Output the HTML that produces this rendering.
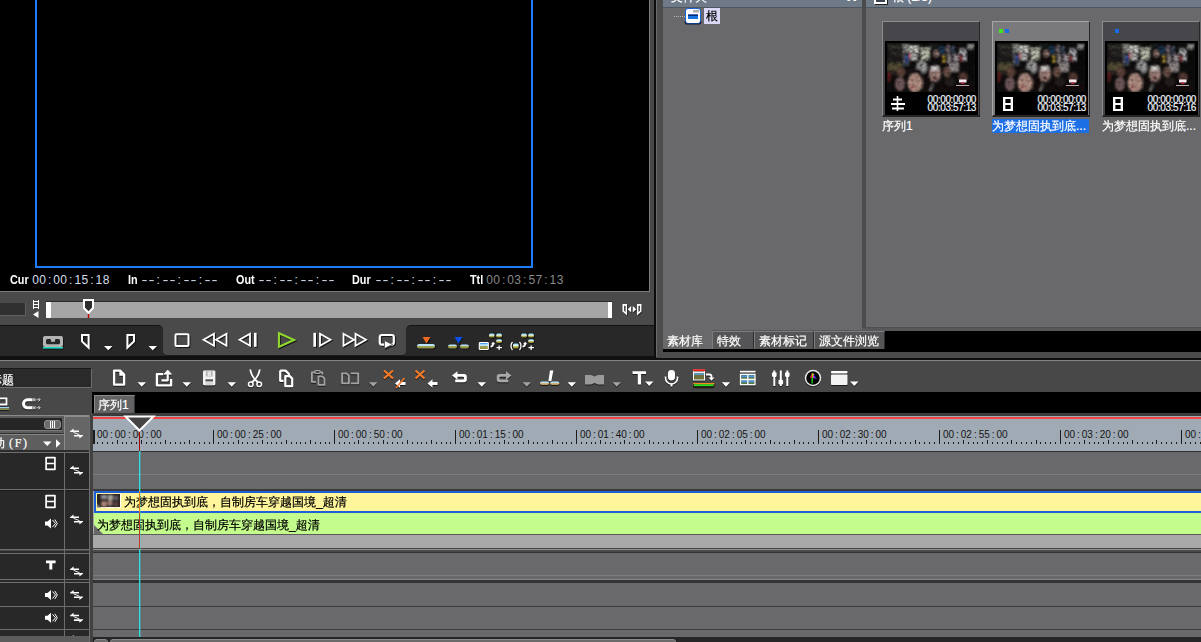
<!DOCTYPE html>
<html lang="zh">
<head>
<meta charset="utf-8">
<title>EDIUS</title>
<style>
html,body{margin:0;padding:0;}
body{width:1201px;height:642px;overflow:hidden;position:relative;background:#3f3f3f;
 font-family:"Liberation Sans","WenQuanYi Zen Hei","Noto Sans CJK SC",sans-serif;font-size:12px;color:#fff;}
.a{position:absolute;}
.cj{font-family:"Liberation Sans","WenQuanYi Zen Hei","Noto Sans CJK SC",sans-serif;font-size:12px;line-height:14px;white-space:nowrap;-webkit-text-stroke:0.2px;}
svg{position:absolute;overflow:visible;}
/* ---------- monitor ---------- */
#mon{left:0;top:0;width:649px;height:291px;background:#000;}
#monR{left:649px;top:0;width:1px;height:292px;background:#7c7c7c;}
#monB{left:0;top:291px;width:650px;height:1px;background:#7c7c7c;}
#safe{left:35px;top:-4px;width:494px;height:268px;border:2px solid #1f7cf8;}
.tc{top:273px;height:14px;line-height:14px;font-size:11px;white-space:nowrap;}
.tc b{font-weight:bold;color:#fff;font-size:12px;display:inline-block;transform:scaleX(0.9);transform-origin:0 50%;}
.tn{color:#d6deee;font-size:0;}
.tn i{display:inline-block;font-style:normal;font-size:12px;width:7.05px;text-align:center;}
.tn i.d{transform:scaleX(1.5);}
#scrubP{left:0;top:292px;width:654px;height:33px;background:#4a4a4a;border-radius:0 0 4px 0;}
#gapV{left:650px;top:0;width:4px;height:326px;background:#484848;}
#blkV{left:654px;top:0;width:2px;height:359px;background:#0c0c0c;}
#ltV{left:656px;top:0;width:1px;height:357px;background:#6c6c6c;}
#frmV{left:657px;top:0;width:6px;height:357px;background:#4c4c4c;}
#trans{left:0;top:325px;width:654px;height:31px;background:#282828;border-top:1px solid #141414;box-sizing:border-box;}
#transTab{left:163px;top:325px;width:243px;height:30px;background:#4a4a4a;border-radius:0 0 4px 4px;box-shadow:0 1px 0 #1c1c1c;}
.crn{top:325px;width:5px;height:5px;background:#4a4a4a;}
.crn i{position:absolute;left:0;top:0;width:5px;height:5px;background:#282828;border-top:1px solid #141414;box-sizing:border-box;}
#hblk{left:0;top:356px;width:654px;height:4px;background:#101010;}
#hblk2{left:654px;top:358px;width:547px;height:2px;background:#101010;}
#hlt{left:0;top:360px;width:1201px;height:1px;background:#868686;}
/* ---------- bin ---------- */
#bin{left:663px;top:0;width:538px;height:331px;background:#69696b;}
#binHdr{left:663px;top:0;width:538px;height:7px;background:#6e7a88;border-bottom:1px solid #4e565f;}
#split{left:862px;top:0;width:4px;height:328px;background:#4b4b4d;}

#binFrm{left:657px;top:352px;width:544px;height:6px;background:#4c4c4c;}
.tab{top:331px;height:18px;background:#555557;border-left:1px solid #7d7d7d;border-top:1px solid #7d7d7d;border-right:1px solid #2c2c2c;box-sizing:border-box;}
.tab span,.tabA span{position:absolute;left:3px;top:2px;}
.card{width:98px;height:96px;background:#47464b;box-sizing:border-box;border-left:1px solid #8c8c8c;border-top:1px solid #8c8c8c;border-right:1px solid #252525;border-bottom:2px solid #252525;}
.card .blk{position:absolute;left:2px;top:19px;width:93px;height:74px;background:#000;}
.card .tcs{position:absolute;right:3px;font-weight:normal;color:#eef3fb;text-align:right;white-space:nowrap;line-height:8px;top:74px;font-size:10px;letter-spacing:-0.4px;-webkit-text-stroke:0.2px;}
.lbl{top:119px;height:14px;}
/* ---------- timeline ---------- */
#tb{left:0;top:361px;width:1201px;height:31px;background:#484848;}
#tlBlk{left:92px;top:392px;width:1109px;height:21px;background:#000;}
#seqTab{left:94px;top:395px;width:41px;height:19px;background:#626264;box-sizing:border-box;border-left:1px solid #8a8a8a;border-top:1px solid #8a8a8a;border-right:1px solid #333;}
#ruler{left:93px;top:416px;width:1108px;height:35px;background:#a0aab4;}
.rl{top:428px;height:14px;line-height:14px;font-size:10px;color:#151515;white-space:nowrap;}
.rl i{font-style:normal;display:inline-block;width:6.7px;text-align:center;}
.trk{left:93px;width:1108px;background:#69696b;}
.hd{left:0;width:64px;background:#282828;}
.hb{left:65px;width:24px;background:#282828;}
</style>
</head>
<body>
<!-- MONITOR -->
<div class="a" id="mon"></div>
<div class="a" id="safe"></div>
<div class="a" id="monR"></div>
<div class="a" id="monB"></div>
<div class="a tc" style="left:10px"><b>Cur</b></div><div class="a tc tn" style="left:32px"><i class="n">0</i><i class="n">0</i><i class="n">:</i><i class="n">0</i><i class="n">0</i><i class="n">:</i><i class="n">1</i><i class="n">5</i><i class="n">:</i><i class="n">1</i><i class="n">8</i></div>
<div class="a tc" style="left:128px"><b>In</b></div><div class="a tc tn" style="left:140.5px"><i class="d">-</i><i class="d">-</i><i class="n">:</i><i class="d">-</i><i class="d">-</i><i class="n">:</i><i class="d">-</i><i class="d">-</i><i class="n">:</i><i class="d">-</i><i class="d">-</i></div>
<div class="a tc" style="left:236px"><b>Out</b></div><div class="a tc tn" style="left:257.5px"><i class="d">-</i><i class="d">-</i><i class="n">:</i><i class="d">-</i><i class="d">-</i><i class="n">:</i><i class="d">-</i><i class="d">-</i><i class="n">:</i><i class="d">-</i><i class="d">-</i></div>
<div class="a tc" style="left:352px"><b>Dur</b></div><div class="a tc tn" style="left:374.5px"><i class="d">-</i><i class="d">-</i><i class="n">:</i><i class="d">-</i><i class="d">-</i><i class="n">:</i><i class="d">-</i><i class="d">-</i><i class="n">:</i><i class="d">-</i><i class="d">-</i></div>
<div class="a tc" style="left:470px"><b>Ttl</b></div><div class="a tc tn" style="left:486px;color:#8a8a8a"><i class="n">0</i><i class="n">0</i><i class="n">:</i><i class="n">0</i><i class="n">3</i><i class="n">:</i><i class="n">5</i><i class="n">7</i><i class="n">:</i><i class="n">1</i><i class="n">3</i></div>
<div class="a" id="gapV"></div>
<div class="a" id="scrubP"></div>
<div class="a" style="left:0;top:303px;width:25px;height:12px;background:#303030;border-right:1px solid #606060;border-bottom:1px solid #606060;"></div>
<svg style="left:32px;top:299px" width="8" height="20" viewBox="0 0 8 20">
 <path d="M1.5 1v9M6.5 1v9M1 2.5h6M1 5.5h6M1 8.5h6" stroke="#fff" stroke-width="1" fill="none"/>
 <path d="M1 15.5L6.5 12v7z" fill="#fff"/>
</svg>
<div class="a" style="left:46px;top:301px;width:566px;height:17px;background:#a6a6a6;border-top:1px solid #2a2a2a;box-sizing:border-box;"></div>
<div class="a" style="left:46px;top:302px;width:5px;height:16px;background:#fff;border-radius:1px;"></div>
<div class="a" style="left:608px;top:302px;width:4px;height:16px;background:#fff;"></div>
<svg style="left:82px;top:298px" width="14" height="21" viewBox="0 0 14 21">
 <path d="M2 2h9v8l-4.500 4.800l-4.500-4.800z" fill="#2c2c2c" stroke="#fff" stroke-width="2" stroke-linejoin="miter"/>
 <path d="M6.5 16v4" stroke="#c00000" stroke-width="1.4"/>
</svg>
<svg style="left:621px;top:302px" width="22" height="16" viewBox="0 0 22 16">
 <g fill="#1c1c1c" transform="translate(0.6,1)"><path d="M1.500 2h4.500v11.500l-4.500-4z"/><path d="M20.500 2h-4.500v11.500l4.500-4z"/><path d="M10.200 4v6.500l-3.400-3.250z"/><path d="M11.800 4v6.500l3.400-3.250z"/></g>
 <path d="M1.500 2h4.500v11.500l-4.500-4z M3.200 3.800v5l1.300 1.300v-6.300z" fill="#fff" fill-rule="evenodd"/>
 <path d="M20.500 2h-4.500v11.500l4.500-4z M18.800 3.800v5l-1.300 1.300v-6.300z" fill="#fff" fill-rule="evenodd"/>
 <path d="M10.200 4v6.500l-3.400-3.250z" fill="#fff"/><path d="M11.800 4v6.500l3.400-3.250z" fill="#fff"/>
</svg>
<div class="a" id="trans"></div>
<div class="a" id="transTab"></div>
<div class="a crn" style="left:158px"><i style="border-radius:0 5px 0 0"></i></div><div class="a crn" style="left:406px"><i style="border-radius:5px 0 0 0"></i></div>
<div class="a" id="blkV"></div>
<div class="a" id="ltV"></div>
<div class="a" id="frmV"></div>
<!-- transport icons : page coordinates -->
<svg style="left:0;top:326px;filter:drop-shadow(1px 1px 0 #161616);" width="654" height="30" viewBox="0 326 654 30">
 <defs>
  <linearGradient id="cap" x1="0" y1="0" x2="0" y2="1"><stop offset="0" stop-color="#b8e4f8"/><stop offset="0.5" stop-color="#b8e4f8"/><stop offset="0.5" stop-color="#a4a458"/><stop offset="1" stop-color="#8c8c40"/></linearGradient>
  <linearGradient id="cap3" x1="0" y1="0" x2="0" y2="1"><stop offset="0" stop-color="#7adcff"/><stop offset="0.4" stop-color="#e8f6ff"/><stop offset="0.55" stop-color="#c8c870"/><stop offset="1" stop-color="#77771c"/></linearGradient>
 </defs>
 <!-- cassette -->
 <rect x="43" y="336" width="20" height="11" rx="2" fill="#b4b4b4"/>
 <path d="M46 340.500a1.500 1.500 0 0 1 1.500-1.500h2.500a1 1 0 0 1 1 1v1.800h4v-1.800a1 1 0 0 1 1-1h2.500a1.500 1.500 0 0 1 1.500 1.500v2.300a1.500 1.500 0 0 1-1.500 1.500h-11a1.500 1.500 0 0 1-1.500-1.500z" fill="#262626"/>
 <rect x="43" y="347" width="20" height="1.600" fill="#1fd9c3"/>
 <!-- mark in -->
 <path d="M82 335h6.600v12.600l-6.600-6.200z" fill="none" stroke="#fff" stroke-width="2"/>
 <path d="M104 346h8.500l-4.250 4.300z" fill="#fff"/>
 <!-- mark out -->
 <path d="M134 335h-6.600v12.600l6.600-6.200z" fill="none" stroke="#fff" stroke-width="2"/>
 <path d="M148.500 346h8.500l-4.250 4.300z" fill="#fff"/>
 <!-- stop -->
 <rect x="175.500" y="334.300" width="13" height="11.600" rx="1" fill="none" stroke="#fff" stroke-width="2"/>
 <!-- rewind -->
 <path d="M214 333.800v12l-10.500-6z M226.500 333.800v12l-10.500-6z" fill="none" stroke="#fff" stroke-width="1.800" stroke-linejoin="miter"/>
 <!-- step back -->
 <path d="M250 333.800v12l-10.500-6z" fill="none" stroke="#fff" stroke-width="1.800"/>
 <rect x="254" y="332.800" width="2.600" height="14" fill="#fff"/>
 <!-- play -->
 <path d="M279 333.300v13.400l15-6.700z" fill="none" stroke="#8fd42f" stroke-width="2.200"/>
 <!-- step fwd -->
 <rect x="313.400" y="332.800" width="2.600" height="14" fill="#fff"/>
 <path d="M320 333.800v12l10.500-6z" fill="none" stroke="#fff" stroke-width="1.800"/>
 <!-- ffwd -->
 <path d="M343.500 333.800v12l10.500-6z M355.500 333.800v12l10.500-6z" fill="none" stroke="#fff" stroke-width="1.800"/>
 <!-- loop play -->
 <rect x="379.800" y="335" width="14" height="9.600" rx="2" fill="none" stroke="#fff" stroke-width="2.200"/>
 <path d="M384.500 340.500l8 4l-8 4z" fill="#fff" stroke="#4a4a4a" stroke-width="0.800"/>
 <!-- insert -->
 <path d="M422.500 337h8l-4 6.500z" fill="#f26a1e"/>
 <rect x="417" y="344" width="18" height="4.400" rx="2.200" fill="url(#cap)"/>
 <!-- overwrite -->
 <path d="M454.500 337h8l-4 6.500z" fill="#0a50f0"/>
 <rect x="448" y="344.400" width="9" height="4" rx="2" fill="url(#cap)"/>
 <rect x="460" y="344.400" width="9" height="4" rx="2" fill="url(#cap)"/>
 <!-- add to bin -->
 <rect x="479.300" y="342.500" width="9" height="7" rx="0.800" fill="url(#cap)" stroke="#fff" stroke-width="1.100"/>
 <rect x="480" y="343.200" width="7.600" height="0.900" fill="#3a8af0"/>
 <rect x="489" y="333.600" width="5.500" height="4" rx="1.600" fill="url(#cap3)"/>
 <rect x="496.200" y="333.600" width="5.700" height="4" rx="1.600" fill="url(#cap3)"/>
 <rect x="496.200" y="339.200" width="5.700" height="3.800" rx="1.600" fill="url(#cap3)"/>
 <path d="M490.500 346.500q2.600 0 2.600-2.600" fill="none" stroke="#fff" stroke-width="1.700"/>
 <path d="M490.900 344.200l2.300-2.400l2.200 2.400z" fill="#fff"/>
 <path d="M496.500 347.700h5.400M499.200 345.400v4.600" stroke="#fff" stroke-width="1.300"/>
 <!-- add in/out to bin -->
 <rect x="513" y="343.400" width="5.600" height="5.200" rx="1.500" fill="url(#cap3)"/>
 <path d="M512.500 342c-2 2-2 6 0 8M519.500 342c2 2 2 6 0 8" fill="none" stroke="#fff" stroke-width="1.300"/>
 <rect x="521.200" y="333.600" width="5.700" height="4" rx="1.600" fill="url(#cap3)"/>
 <rect x="528.200" y="333.600" width="5.700" height="4" rx="1.600" fill="url(#cap3)"/>
 <rect x="528.200" y="339.200" width="5.700" height="3.800" rx="1.600" fill="url(#cap3)"/>
 <path d="M522.500 346.500q2.600 0 2.600-2.600" fill="none" stroke="#fff" stroke-width="1.700"/>
 <path d="M522.900 344.200l2.300-2.400l2.200 2.400z" fill="#fff"/>
 <path d="M528.500 347.700h5.400M531.200 345.400v4.600" stroke="#fff" stroke-width="1.300"/>
</svg>
<!-- BIN -->
<svg width="0" height="0" style="left:0;top:0">
 <defs>
  <filter id="bl" x="-10%" y="-10%" width="120%" height="120%"><feGaussianBlur stdDeviation="0.8"/></filter>
  <filter id="nz" x="0" y="0" width="100%" height="100%"><feTurbulence type="fractalNoise" baseFrequency="0.28 0.34" numOctaves="2" seed="7"/><feColorMatrix type="matrix" values="0 0 0 0 0  0 0 0 0 0  0 0 0 0 0  1.9 0 0 0 -0.62"/></filter>
  <symbol id="photo" viewBox="0 0 88 49">
   <rect width="88" height="49" fill="#120f0f"/>
   <g filter="url(#bl)">
    <rect x="0" y="0" width="17" height="20" fill="#262320"/>
    <rect x="1" y="3" width="14" height="2" fill="#4a4842"/>
    <rect x="4" y="9" width="12" height="2" fill="#3c3a34"/>
    <rect x="0" y="20" width="15" height="7" fill="#5e583c"/>
    <rect x="0" y="27" width="16" height="5" fill="#2e2624"/>
    <rect x="16" y="1" width="7" height="9" fill="#9c9c98"/>
    <rect x="16" y="11" width="6" height="12" fill="#5a6068"/>
    <rect x="23" y="2" width="9" height="8" fill="#e2e2da"/>
    <rect x="23" y="11" width="8" height="7" fill="#8a8c88"/>
    <rect x="33.500" y="4" width="9.500" height="13" fill="#c9cdb9"/>
    <rect x="23" y="9" width="8" height="8" fill="#c6c2c2"/>
    <rect x="22" y="9.500" width="1.500" height="6" fill="#c02424"/>
    <rect x="19" y="12" width="2" height="8" fill="#2858c0"/>
    <rect x="43" y="1" width="9" height="6" fill="#1c2024"/>
    <ellipse cx="49" cy="11" rx="3" ry="3.500" fill="#b09088"/>
    <rect x="52" y="3" width="6" height="9" fill="#1e3c58"/>
    <rect x="55" y="12" width="3.500" height="8" fill="#b89a30"/>
    <rect x="59" y="2" width="4" height="10" fill="#7a7078"/>
    <rect x="60" y="12" width="5" height="9" fill="#8c8484"/>
    <rect x="64" y="3" width="4" height="8" fill="#4a5a70"/>
    <rect x="66" y="11" width="6" height="10" fill="#9a9094"/>
    <rect x="72" y="5" width="5" height="6" fill="#b0b0b4"/>
    <rect x="72" y="12" width="4" height="7" fill="#8a3038"/>
    <rect x="76" y="6" width="3" height="12" fill="#c8c8d0"/>
    <rect x="80" y="1" width="7" height="5" fill="#b4b4b0"/>
    <rect x="79" y="7" width="9" height="32" fill="#100c0c"/>
    <rect x="62" y="21" width="10" height="8" fill="#a09898"/>
    <ellipse cx="35" cy="24" rx="6" ry="7" fill="#a4a4a4"/>
    <ellipse cx="27.500" cy="29" rx="8" ry="3.500" fill="#1a1414"/>
    <ellipse cx="28" cy="40" rx="7.500" ry="9.500" fill="#c9a294"/>
    <ellipse cx="26" cy="44" rx="3" ry="1.500" fill="#a05a58"/>
    <ellipse cx="48" cy="31" rx="6" ry="8" fill="#b4948a"/>
    <ellipse cx="48" cy="25" rx="5" ry="2.800" fill="#e6e2e2"/>
    <ellipse cx="48" cy="35" rx="2.500" ry="2" fill="#6a3a38"/>
    <ellipse cx="60" cy="29" rx="4" ry="5.500" fill="#74594e"/>
    <ellipse cx="76" cy="34" rx="4.500" ry="4.500" fill="#5e423a"/>
    <ellipse cx="14" cy="29" rx="4.500" ry="5" fill="#66493f"/>
    <ellipse cx="13" cy="41" rx="5" ry="7" fill="#84686a"/>
    <ellipse cx="2" cy="34" rx="1.800" ry="5" fill="#6a2222"/>
    <rect x="36" y="34" width="8" height="15" fill="#141010"/>
    <path d="M42 48l4-8l1 1l-3 8z" fill="#8a8a88"/>
    <rect x="52" y="40" width="36" height="9" fill="#120e0e"/>
    <ellipse cx="63" cy="39" rx="5" ry="4" fill="#2c2624"/>
    <ellipse cx="24.800" cy="37.500" rx="1.700" ry="0.800" fill="#3a2826"/>
    <ellipse cx="31.200" cy="37.800" rx="1.700" ry="0.800" fill="#3a2826"/>
    <ellipse cx="45.800" cy="29.500" rx="1.300" ry="0.700" fill="#4a3430"/>
    <ellipse cx="50.500" cy="29.500" rx="1.300" ry="0.700" fill="#4a3430"/>
   </g>
   <rect width="88" height="23" filter="url(#nz)" opacity="0.55"/><rect y="23" width="88" height="26" filter="url(#nz)" opacity="0.3"/>
   <rect width="88" height="49" fill="#000" opacity="0.08"/>
   <rect x="72" y="36.500" width="7.500" height="3" fill="#f4e8ec"/>
   <rect x="74" y="39.500" width="3.500" height="1.500" fill="#b02038"/>
   <rect x="69" y="42" width="13" height="1" fill="#b8a8ac"/>
  </symbol>
 </defs>
</svg>
<div class="a" id="bin"></div>
<div class="a" id="binHdr"></div>
<div class="a" style="left:663px;top:327px;width:538px;height:4px;background:#58585a;"></div>
<div class="a" style="left:663px;top:8px;width:199px;height:322px;background:#69696b;"></div>
<div class="a" id="split"></div>
<div class="a" style="left:866px;top:327px;width:335px;height:1px;background:#4e4e50;"></div>
<!-- header texts (cut off by top edge) -->
<div class="a cj" style="left:671px;top:-10px;font-size:12px;">文件夹</div>
<div class="a" style="left:847px;top:-11px;font-size:17px;font-weight:bold;line-height:14px;">x</div>
<div class="a" style="left:874px;top:-9px;width:13px;height:13px;background:#fff;box-shadow:1px 1px 0 #222;"></div><div class="a" style="left:876px;top:-7px;width:9px;height:9px;background:#3c4450;"></div>
<div class="a cj" style="left:892px;top:-10px;">根 (1/3)</div>
<!-- tree -->
<div class="a" style="left:674px;top:16px;width:11px;height:0;border-top:1px dotted #b4b4b4;"></div>
<svg style="left:685px;top:8px" width="16" height="16" viewBox="0 0 16 16">
 <rect x="0.500" y="0.500" width="15" height="15" rx="2.500" fill="#fdfdfd" stroke="#1a62d8" stroke-width="1"/>
 <path d="M0 13.500q0 2.500 2.500 2.500h11q2.500 0 2.500-2.500" fill="none" stroke="#0a1a3a" stroke-width="1.200"/>
 <rect x="8" y="2" width="6" height="2.500" fill="#b0b0b0"/>
 <rect x="3" y="6.500" width="10" height="4.500" fill="#1573e6"/>
 <rect x="3" y="6.500" width="10" height="1.500" fill="#0a2a78"/>
</svg>
<div class="a cj" style="left:704px;top:8px;width:16px;height:16px;background:#d9d9f7;color:#000;line-height:16px;text-align:center;">根</div>
<div class="a card" style="left:882px;top:21px;background:#47464b;border-left-color:#8c8c8c;border-top-color:#8c8c8c"><div class="blk"></div><svg style="left:4px;top:21px" width="88" height="49"><use href="#photo"/></svg><svg style="left:8px;top:74px" width="15" height="15" viewBox="0 0 15 15"><path d="M2 3.500h9M0 8h14M1 12.500h12" stroke="#fff" stroke-width="1.800"/><path d="M6.500 0v15" stroke="#fff" stroke-width="1.600"/></svg><div class="tcs">00:00:00:00<br>00:03:57:13</div></div>
<div class="a cj lbl" style="left:882px;">序列1</div>
<div class="a card" style="left:992px;top:21px;background:#7a7a7d;border-left-color:#a6a6a6;border-top-color:#a6a6a6"><div class="a" style="left:6px;top:7px;width:4px;height:4px;background:#3ee61c"></div><div class="a" style="left:12px;top:7px;width:4px;height:4px;background:#1a6be6"></div><div class="blk"></div><svg style="left:4px;top:21px" width="88" height="49"><use href="#photo"/></svg><svg style="left:10px;top:75px" width="10" height="14" viewBox="0 0 10 14"><path d="M1.200 0v14M8.800 0v14" stroke="#fff" stroke-width="2.400" fill="none"/><path d="M1 1h8M1 7h8M1 13h8" stroke="#fff" stroke-width="2" fill="none"/></svg><div class="tcs">00:00:00:00<br>00:03:57:13</div></div>
<div class="a cj lbl" style="left:992px;width:97px;background:#1d6fe6;">为梦想固执到底...</div>
<div class="a card" style="left:1102px;top:21px;background:#47464b;border-left-color:#8c8c8c;border-top-color:#8c8c8c"><div class="a" style="left:12px;top:7px;width:4px;height:4px;background:#1a6be6"></div><div class="blk"></div><svg style="left:4px;top:21px" width="88" height="49"><use href="#photo"/></svg><svg style="left:10px;top:75px" width="10" height="14" viewBox="0 0 10 14"><path d="M1.200 0v14M8.800 0v14" stroke="#fff" stroke-width="2.400" fill="none"/><path d="M1 1h8M1 7h8M1 13h8" stroke="#fff" stroke-width="2" fill="none"/></svg><div class="tcs">00:00:00:00<br>00:03:57:16</div></div>
<div class="a cj lbl" style="left:1102px;">为梦想固执到底...</div>
<!-- tabs -->
<div class="a" style="left:663px;top:331px;width:538px;height:21px;background:#000;"></div>
<div class="a tabA" style="left:663px;top:328px;width:49px;height:21px;background:#69696b;"><span class="cj" style="left:4px;top:6px;">素材库</span></div>
<div class="a tab" style="left:712px;width:42px;"><span class="cj" style="left:4px">特效</span></div>
<div class="a tab" style="left:754px;width:60px;"><span class="cj" style="left:4px">素材标记</span></div>
<div class="a tab" style="left:814px;width:71px;"><span class="cj" style="left:4px">源文件浏览</span></div>
<div class="a" id="binFrm"></div>
<div class="a" id="hblk"></div><div class="a" id="hblk2"></div>
<div class="a" id="hlt"></div>
<!-- TIMELINE -->
<div class="a" id="tb"></div>
<div class="a" style="left:0;top:392px;width:92px;height:23px;background:#484848;"></div>
<div class="a" style="left:0;top:368px;width:92px;height:20px;background:#2a2a2a;box-sizing:border-box;border-top:1px solid #1a1a1a;border-bottom:1px solid #6c6c6c;border-right:1px solid #6c6c6c;overflow:hidden;"><span class="cj" style="position:absolute;left:-22px;top:4px;">无标题</span></div>
<div class="a" id="tlBlk"></div>
<div class="a" id="seqTab"><span class="cj" style="position:absolute;left:3px;top:2px;">序列1</span></div>
<!-- toolbar icons : page coordinates -->
<svg style="left:0;top:361px;filter:drop-shadow(0 1px 0 #1c1c1c);" width="1201" height="54" viewBox="0 361 1201 54">
 <defs>
  <linearGradient id="cap2" x1="0" y1="0" x2="0" y2="1"><stop offset="0" stop-color="#b8e4f8"/><stop offset="0.5" stop-color="#b8e4f8"/><stop offset="0.5" stop-color="#d8b478"/><stop offset="1" stop-color="#a89058"/></linearGradient>
  <path id="tri" d="M0 0h8.500l-4.250 4.500z"/>
 </defs>
 <g fill="none" stroke="#fff" stroke-width="2" stroke-linejoin="round">
  <!-- new -->
  <path d="M114.100 370.700h6.200l3.800 3.800v10.200h-10z" stroke-width="2.300"/>
  <path d="M119.300 370.700v5h5z" fill="#fff" stroke="none"/>
  <!-- open -->
  <path d="M163.200 374.200h-6.300v11.200h14.200v-6.300" stroke-width="2.300"/>
  <path d="M161.500 380.300h6.200v-6" stroke-width="2.200"/>
  <path d="M163.800 374.300l3.900-4.400l3.900 4.400z" fill="#fff" stroke-width="0.600"/>
  <!-- copy -->
  <path d="M280.200 370.600h5.300l3.300 3.300v1.200 M280.200 370.600v10.200h3.400" stroke-width="2.200"/>
  <path d="M285.300 376.100h4.400l2.500 2.500v7.600h-6.900z" stroke-width="2.200"/>
 </g>
 <g fill="#fff">
  <use href="#tri" x="137.500" y="382.300"/>
  <use href="#tri" x="182.500" y="382.300"/>
  <use href="#tri" x="227.500" y="382.300"/>
  <use href="#tri" x="477.500" y="382.300"/>
  <use href="#tri" x="567.500" y="382.300"/>
  <use href="#tri" x="645" y="381.500" transform="translate(0,0)"/>
  <use href="#tri" x="721.700" y="382.300"/>
  <use href="#tri" x="850" y="381.500"/>
 </g>
 <g fill="#a2a2a2">
  <use href="#tri" x="369" y="382.300"/>
  <use href="#tri" x="522.500" y="382.300"/>
  <use href="#tri" x="612.500" y="382.300"/>
 </g>
 <!-- save -->
 <rect x="203" y="370.500" width="12.400" height="14.700" rx="1.200" fill="#f2f2f2"/>
 <rect x="205.800" y="370.500" width="6.800" height="6" fill="#b4b4b4"/>
 <rect x="207.600" y="371.300" width="3.400" height="4.600" fill="#e4e4e4"/>
 <rect x="205.500" y="379.300" width="7.500" height="2.300" fill="#505050"/>
 <rect x="205.500" y="381.600" width="7.500" height="3.600" fill="#d8d8d8"/>
 <!-- scissors -->
 <g fill="none" stroke="#fff" stroke-width="1.500">
  <path d="M250.300 369.500q0.700 7 7.700 13M259.700 369.500q-0.700 7-7.700 13" stroke-width="1.900"/>
  <circle cx="250.800" cy="384.300" r="2.300"/><circle cx="259.200" cy="384.300" r="2.300"/>
 </g>
 <!-- paste (disabled) -->
 <g fill="none" stroke="#a4a4a4" stroke-width="1.800" stroke-linejoin="round">
  <path d="M315 372.300h-3.100v9.600h4.100M320.500 372.300h1.800v2.200"/>
  <rect x="314.800" y="370.700" width="5.400" height="2.600" rx="1" stroke-width="1.300"/>
  <path d="M318.400 376.300h3.800l2.300 2.300v6.300h-6.100z"/>
 </g>
 <!-- replace (disabled) -->
 <g fill="none" stroke="#a4a4a4" stroke-width="1.800" stroke-linejoin="round">
  <path d="M342.100 373.300h4.400l2.400 2.400v7.600h-6.800z"/>
  <path d="M350.800 373.300h7.400v10h-7.400"/>
 </g>
 <!-- delete -->
 <g stroke="#f27a2a" stroke-width="2.300" fill="none">
  <path d="M384 370.500l9 8M393 370.500l-9 8"/>
  <path d="M415.500 370.500l9 8M424.500 370.500l-9 8"/>
 </g>
 <path d="M395 383.500l5-4.200v2.600h5.500v3.200h-5.500v2.600z" fill="#fff"/>
 <path d="M396 388l8.500-10" stroke="#f27a2a" stroke-width="1.600"/>
 <path d="M427.500 383.500l5-4.200v2.600h5v3.200h-5v2.600z" fill="#fff"/>
 <!-- undo -->
 <path d="M452 375.600l5.500-4.400v2.800h6.500a2.800 2.800 0 0 1 2.800 2.800v2.700a2.800 2.800 0 0 1-2.800 2.800h-8.800v-2.800h7.800a1 1 0 0 0 1-1v-0.800a1 1 0 0 0-1-1h-5.500v3z" fill="#fff"/>
 <!-- redo -->
 <path d="M511.500 375.600l-5.500-4.400v2.800h-6.500a2.800 2.800 0 0 0-2.800 2.800v2.700a2.800 2.800 0 0 0 2.800 2.800h8.800v-2.800h-7.800a1 1 0 0 1-1-1v-0.800a1 1 0 0 1 1-1h5.500v3z" fill="#a8a8a8"/>
 <!-- razor -->
 <path d="M549.900 370.500h3.500l-2.100 10.800h-2.900z" fill="#fff"/>
 <rect x="540" y="381.500" width="9" height="3.600" rx="1.800" fill="url(#cap2)"/>
 <rect x="550.300" y="381.500" width="9" height="3.600" rx="1.800" fill="url(#cap2)"/>
 <!-- transition (disabled) -->
 <path d="M585 375h6l3.500 1.500l3.500-1.500h6v9.500h-6l-3.500-1.500l-3.500 1.500h-6z" fill="#9a9a9a"/>
 <!-- title T -->
 <path d="M632.500 371.200h13.500v2.800h-5v10.500h-3.200v-10.500h-5.300z" fill="#fff"/>
 <!-- mic -->
 <rect x="668" y="370" width="7" height="10.500" rx="3.400" fill="#fff"/>
 <path d="M665.500 376.500v1.500a6 6 0 0 0 12 0v-1.500" fill="none" stroke="#fff" stroke-width="1.600"/>
 <path d="M671.500 383.500v3" stroke="#fff" stroke-width="2"/>
 <!-- export -->
 <rect x="693.500" y="370" width="11" height="10" fill="#70703a" stroke="#fff" stroke-width="1"/>
 <rect x="693" y="369.300" width="12" height="1.900" fill="#f01818"/>
 <rect x="694" y="371.600" width="10" height="1.600" fill="#d8ecfa"/>
 <rect x="694" y="373.400" width="10" height="1.400" fill="#58a0e0"/>
 <path d="M706 374.500h3.500a2 2 0 0 1 2 2v1.500" fill="none" stroke="#fff" stroke-width="1.800"/>
 <path d="M708.500 377.500h6l-3 3.300z" fill="#fff"/>
 <rect x="693" y="383" width="21.500" height="4.200" rx="1.500" fill="#2a2a10"/>
 <rect x="693" y="383" width="21.500" height="1.400" rx="0.700" fill="#f08a18"/>
 <rect x="694" y="384.300" width="19.500" height="1.700" fill="#22e022"/>
 <!-- grid -->
 <rect x="740" y="370.800" width="15.500" height="1.700" fill="#fff"/>
 <rect x="740.500" y="374.300" width="14.500" height="10.400" fill="#5a7a40" stroke="#fff" stroke-width="1.300"/>
 <rect x="741.500" y="375.300" width="12.500" height="2" fill="#4a90e0"/><rect x="741.500" y="380.400" width="12.500" height="2" fill="#4a90e0"/>
 <path d="M747.800 374v11M740 379.500h15.500" stroke="#fff" stroke-width="1.300"/>
 <!-- mixer -->
 <g fill="#fff">
  <rect x="773.300" y="370.500" width="2" height="15.500"/><rect x="779.800" y="370.500" width="2" height="15.500"/><rect x="786.300" y="370.500" width="2" height="15.500"/>
  <rect x="772" y="372.300" width="4.600" height="4.600" rx="1.200"/><rect x="778.500" y="379.800" width="4.600" height="4.600" rx="1.200"/><rect x="785" y="372.300" width="4.600" height="4.600" rx="1.200"/>
 </g>
 <!-- vectorscope -->
 <circle cx="813" cy="378" r="7.500" fill="#000" stroke="#e8e8e8" stroke-width="1.500"/>
 <path d="M812 383.500l0.500-10" stroke="#20e020" stroke-width="1.300"/>
 <path d="M812 373l-2 5l2.200-0.500z" fill="#ff3020"/>
 <path d="M812.300 372.800l2 1.500l-1.700 3z" fill="#f0d020"/>
 <path d="M813.500 374l3.800 5.500l-3-1.500z" fill="#2040ff"/>
 <path d="M813 374.500l2 4l-2 -0.500z" fill="#e020e0"/>
 <!-- layout -->
 <rect x="831" y="371" width="16.500" height="2.600" rx="0.800" fill="#fff"/>
 <rect x="831" y="374.600" width="16.500" height="10.400" rx="0.800" fill="#f4f4f4"/>
 <!-- second-row icons -->
 <path d="M-2 398.300h8.500v6.200h-8.500" fill="none" stroke="#fff" stroke-width="1.800"/>
 <rect x="-1" y="407" width="10" height="1.500" fill="#9ad4f4"/><rect x="-1" y="408.500" width="10" height="1.500" fill="#8a8a40"/>
 <path d="M32.500 399.800h-5a3.500 3.500 0 0 0 0 8h5" fill="none" stroke="#fff" stroke-width="3"/>
 <rect x="32.500" y="398.300" width="3.200" height="3" fill="#b0b0b0"/><rect x="32.500" y="406.300" width="3.200" height="3" fill="#b0b0b0"/>
 <path d="M36.500 399.800h3.500M38.500 398l1.700 1.800l-1.700 1.800M36.500 407.800h3.500M38.500 406l1.700 1.800l-1.700 1.800" fill="none" stroke="#e0e0e0" stroke-width="0.900"/>
</svg>
<div class="a" style="left:92px;top:413px;width:1109px;height:4px;background:#3a3a3a;"></div>
<div class="a" id="ruler"></div>
<div class="a" style="left:93px;top:417px;width:1108px;height:2px;background:#f24444;"></div>
<div class="a" style="left:93px;top:451px;width:1108px;height:1px;background:#303030;"></div>
<svg style="left:0;top:416px" width="1201" height="36" viewBox="0 416 1201 36" shape-rendering="crispEdges">
<rect x="93" y="430" width="2" height="14" fill="#1c1c1c"/>
<rect x="97" y="442" width="1" height="2" fill="#1c1c1c"/>
<rect x="102" y="442" width="1" height="2" fill="#1c1c1c"/>
<rect x="107" y="442" width="1" height="2" fill="#1c1c1c"/>
<rect x="112" y="442" width="1" height="2" fill="#1c1c1c"/>
<rect x="117" y="440" width="1" height="4" fill="#1c1c1c"/>
<rect x="122" y="442" width="1" height="2" fill="#1c1c1c"/>
<rect x="126" y="442" width="1" height="2" fill="#1c1c1c"/>
<rect x="131" y="442" width="1" height="2" fill="#1c1c1c"/>
<rect x="136" y="442" width="1" height="2" fill="#1c1c1c"/>
<rect x="141" y="440" width="1" height="4" fill="#1c1c1c"/>
<rect x="146" y="442" width="1" height="2" fill="#1c1c1c"/>
<rect x="151" y="442" width="1" height="2" fill="#1c1c1c"/>
<rect x="155" y="442" width="1" height="2" fill="#1c1c1c"/>
<rect x="160" y="442" width="1" height="2" fill="#1c1c1c"/>
<rect x="165" y="440" width="1" height="4" fill="#1c1c1c"/>
<rect x="170" y="442" width="1" height="2" fill="#1c1c1c"/>
<rect x="175" y="442" width="1" height="2" fill="#1c1c1c"/>
<rect x="180" y="442" width="1" height="2" fill="#1c1c1c"/>
<rect x="184" y="442" width="1" height="2" fill="#1c1c1c"/>
<rect x="189" y="440" width="1" height="4" fill="#1c1c1c"/>
<rect x="194" y="442" width="1" height="2" fill="#1c1c1c"/>
<rect x="199" y="442" width="1" height="2" fill="#1c1c1c"/>
<rect x="204" y="442" width="1" height="2" fill="#1c1c1c"/>
<rect x="209" y="442" width="1" height="2" fill="#1c1c1c"/>
<rect x="213" y="430" width="1" height="14" fill="#1c1c1c"/>
<rect x="218" y="442" width="1" height="2" fill="#1c1c1c"/>
<rect x="223" y="442" width="1" height="2" fill="#1c1c1c"/>
<rect x="228" y="442" width="1" height="2" fill="#1c1c1c"/>
<rect x="233" y="442" width="1" height="2" fill="#1c1c1c"/>
<rect x="238" y="440" width="1" height="4" fill="#1c1c1c"/>
<rect x="242" y="442" width="1" height="2" fill="#1c1c1c"/>
<rect x="247" y="442" width="1" height="2" fill="#1c1c1c"/>
<rect x="252" y="442" width="1" height="2" fill="#1c1c1c"/>
<rect x="257" y="442" width="1" height="2" fill="#1c1c1c"/>
<rect x="262" y="440" width="1" height="4" fill="#1c1c1c"/>
<rect x="267" y="442" width="1" height="2" fill="#1c1c1c"/>
<rect x="271" y="442" width="1" height="2" fill="#1c1c1c"/>
<rect x="276" y="442" width="1" height="2" fill="#1c1c1c"/>
<rect x="281" y="442" width="1" height="2" fill="#1c1c1c"/>
<rect x="286" y="440" width="1" height="4" fill="#1c1c1c"/>
<rect x="291" y="442" width="1" height="2" fill="#1c1c1c"/>
<rect x="296" y="442" width="1" height="2" fill="#1c1c1c"/>
<rect x="300" y="442" width="1" height="2" fill="#1c1c1c"/>
<rect x="305" y="442" width="1" height="2" fill="#1c1c1c"/>
<rect x="310" y="440" width="1" height="4" fill="#1c1c1c"/>
<rect x="315" y="442" width="1" height="2" fill="#1c1c1c"/>
<rect x="320" y="442" width="1" height="2" fill="#1c1c1c"/>
<rect x="325" y="442" width="1" height="2" fill="#1c1c1c"/>
<rect x="329" y="442" width="1" height="2" fill="#1c1c1c"/>
<rect x="334" y="430" width="1" height="14" fill="#1c1c1c"/>
<rect x="339" y="442" width="1" height="2" fill="#1c1c1c"/>
<rect x="344" y="442" width="1" height="2" fill="#1c1c1c"/>
<rect x="349" y="442" width="1" height="2" fill="#1c1c1c"/>
<rect x="354" y="442" width="1" height="2" fill="#1c1c1c"/>
<rect x="358" y="440" width="1" height="4" fill="#1c1c1c"/>
<rect x="363" y="442" width="1" height="2" fill="#1c1c1c"/>
<rect x="368" y="442" width="1" height="2" fill="#1c1c1c"/>
<rect x="373" y="442" width="1" height="2" fill="#1c1c1c"/>
<rect x="378" y="442" width="1" height="2" fill="#1c1c1c"/>
<rect x="383" y="440" width="1" height="4" fill="#1c1c1c"/>
<rect x="387" y="442" width="1" height="2" fill="#1c1c1c"/>
<rect x="392" y="442" width="1" height="2" fill="#1c1c1c"/>
<rect x="397" y="442" width="1" height="2" fill="#1c1c1c"/>
<rect x="402" y="442" width="1" height="2" fill="#1c1c1c"/>
<rect x="407" y="440" width="1" height="4" fill="#1c1c1c"/>
<rect x="412" y="442" width="1" height="2" fill="#1c1c1c"/>
<rect x="417" y="442" width="1" height="2" fill="#1c1c1c"/>
<rect x="421" y="442" width="1" height="2" fill="#1c1c1c"/>
<rect x="426" y="442" width="1" height="2" fill="#1c1c1c"/>
<rect x="431" y="440" width="1" height="4" fill="#1c1c1c"/>
<rect x="436" y="442" width="1" height="2" fill="#1c1c1c"/>
<rect x="441" y="442" width="1" height="2" fill="#1c1c1c"/>
<rect x="446" y="442" width="1" height="2" fill="#1c1c1c"/>
<rect x="450" y="442" width="1" height="2" fill="#1c1c1c"/>
<rect x="455" y="430" width="1" height="14" fill="#1c1c1c"/>
<rect x="460" y="442" width="1" height="2" fill="#1c1c1c"/>
<rect x="465" y="442" width="1" height="2" fill="#1c1c1c"/>
<rect x="470" y="442" width="1" height="2" fill="#1c1c1c"/>
<rect x="475" y="442" width="1" height="2" fill="#1c1c1c"/>
<rect x="479" y="440" width="1" height="4" fill="#1c1c1c"/>
<rect x="484" y="442" width="1" height="2" fill="#1c1c1c"/>
<rect x="489" y="442" width="1" height="2" fill="#1c1c1c"/>
<rect x="494" y="442" width="1" height="2" fill="#1c1c1c"/>
<rect x="499" y="442" width="1" height="2" fill="#1c1c1c"/>
<rect x="504" y="440" width="1" height="4" fill="#1c1c1c"/>
<rect x="508" y="442" width="1" height="2" fill="#1c1c1c"/>
<rect x="513" y="442" width="1" height="2" fill="#1c1c1c"/>
<rect x="518" y="442" width="1" height="2" fill="#1c1c1c"/>
<rect x="523" y="442" width="1" height="2" fill="#1c1c1c"/>
<rect x="528" y="440" width="1" height="4" fill="#1c1c1c"/>
<rect x="533" y="442" width="1" height="2" fill="#1c1c1c"/>
<rect x="537" y="442" width="1" height="2" fill="#1c1c1c"/>
<rect x="542" y="442" width="1" height="2" fill="#1c1c1c"/>
<rect x="547" y="442" width="1" height="2" fill="#1c1c1c"/>
<rect x="552" y="440" width="1" height="4" fill="#1c1c1c"/>
<rect x="557" y="442" width="1" height="2" fill="#1c1c1c"/>
<rect x="562" y="442" width="1" height="2" fill="#1c1c1c"/>
<rect x="566" y="442" width="1" height="2" fill="#1c1c1c"/>
<rect x="571" y="442" width="1" height="2" fill="#1c1c1c"/>
<rect x="576" y="430" width="1" height="14" fill="#1c1c1c"/>
<rect x="581" y="442" width="1" height="2" fill="#1c1c1c"/>
<rect x="586" y="442" width="1" height="2" fill="#1c1c1c"/>
<rect x="591" y="442" width="1" height="2" fill="#1c1c1c"/>
<rect x="595" y="442" width="1" height="2" fill="#1c1c1c"/>
<rect x="600" y="440" width="1" height="4" fill="#1c1c1c"/>
<rect x="605" y="442" width="1" height="2" fill="#1c1c1c"/>
<rect x="610" y="442" width="1" height="2" fill="#1c1c1c"/>
<rect x="615" y="442" width="1" height="2" fill="#1c1c1c"/>
<rect x="620" y="442" width="1" height="2" fill="#1c1c1c"/>
<rect x="624" y="440" width="1" height="4" fill="#1c1c1c"/>
<rect x="629" y="442" width="1" height="2" fill="#1c1c1c"/>
<rect x="634" y="442" width="1" height="2" fill="#1c1c1c"/>
<rect x="639" y="442" width="1" height="2" fill="#1c1c1c"/>
<rect x="644" y="442" width="1" height="2" fill="#1c1c1c"/>
<rect x="649" y="440" width="1" height="4" fill="#1c1c1c"/>
<rect x="653" y="442" width="1" height="2" fill="#1c1c1c"/>
<rect x="658" y="442" width="1" height="2" fill="#1c1c1c"/>
<rect x="663" y="442" width="1" height="2" fill="#1c1c1c"/>
<rect x="668" y="442" width="1" height="2" fill="#1c1c1c"/>
<rect x="673" y="440" width="1" height="4" fill="#1c1c1c"/>
<rect x="678" y="442" width="1" height="2" fill="#1c1c1c"/>
<rect x="682" y="442" width="1" height="2" fill="#1c1c1c"/>
<rect x="687" y="442" width="1" height="2" fill="#1c1c1c"/>
<rect x="692" y="442" width="1" height="2" fill="#1c1c1c"/>
<rect x="697" y="430" width="1" height="14" fill="#1c1c1c"/>
<rect x="702" y="442" width="1" height="2" fill="#1c1c1c"/>
<rect x="707" y="442" width="1" height="2" fill="#1c1c1c"/>
<rect x="712" y="442" width="1" height="2" fill="#1c1c1c"/>
<rect x="716" y="442" width="1" height="2" fill="#1c1c1c"/>
<rect x="721" y="440" width="1" height="4" fill="#1c1c1c"/>
<rect x="726" y="442" width="1" height="2" fill="#1c1c1c"/>
<rect x="731" y="442" width="1" height="2" fill="#1c1c1c"/>
<rect x="736" y="442" width="1" height="2" fill="#1c1c1c"/>
<rect x="741" y="442" width="1" height="2" fill="#1c1c1c"/>
<rect x="745" y="440" width="1" height="4" fill="#1c1c1c"/>
<rect x="750" y="442" width="1" height="2" fill="#1c1c1c"/>
<rect x="755" y="442" width="1" height="2" fill="#1c1c1c"/>
<rect x="760" y="442" width="1" height="2" fill="#1c1c1c"/>
<rect x="765" y="442" width="1" height="2" fill="#1c1c1c"/>
<rect x="770" y="440" width="1" height="4" fill="#1c1c1c"/>
<rect x="774" y="442" width="1" height="2" fill="#1c1c1c"/>
<rect x="779" y="442" width="1" height="2" fill="#1c1c1c"/>
<rect x="784" y="442" width="1" height="2" fill="#1c1c1c"/>
<rect x="789" y="442" width="1" height="2" fill="#1c1c1c"/>
<rect x="794" y="440" width="1" height="4" fill="#1c1c1c"/>
<rect x="799" y="442" width="1" height="2" fill="#1c1c1c"/>
<rect x="803" y="442" width="1" height="2" fill="#1c1c1c"/>
<rect x="808" y="442" width="1" height="2" fill="#1c1c1c"/>
<rect x="813" y="442" width="1" height="2" fill="#1c1c1c"/>
<rect x="818" y="430" width="1" height="14" fill="#1c1c1c"/>
<rect x="823" y="442" width="1" height="2" fill="#1c1c1c"/>
<rect x="828" y="442" width="1" height="2" fill="#1c1c1c"/>
<rect x="832" y="442" width="1" height="2" fill="#1c1c1c"/>
<rect x="837" y="442" width="1" height="2" fill="#1c1c1c"/>
<rect x="842" y="440" width="1" height="4" fill="#1c1c1c"/>
<rect x="847" y="442" width="1" height="2" fill="#1c1c1c"/>
<rect x="852" y="442" width="1" height="2" fill="#1c1c1c"/>
<rect x="857" y="442" width="1" height="2" fill="#1c1c1c"/>
<rect x="861" y="442" width="1" height="2" fill="#1c1c1c"/>
<rect x="866" y="440" width="1" height="4" fill="#1c1c1c"/>
<rect x="871" y="442" width="1" height="2" fill="#1c1c1c"/>
<rect x="876" y="442" width="1" height="2" fill="#1c1c1c"/>
<rect x="881" y="442" width="1" height="2" fill="#1c1c1c"/>
<rect x="886" y="442" width="1" height="2" fill="#1c1c1c"/>
<rect x="890" y="440" width="1" height="4" fill="#1c1c1c"/>
<rect x="895" y="442" width="1" height="2" fill="#1c1c1c"/>
<rect x="900" y="442" width="1" height="2" fill="#1c1c1c"/>
<rect x="905" y="442" width="1" height="2" fill="#1c1c1c"/>
<rect x="910" y="442" width="1" height="2" fill="#1c1c1c"/>
<rect x="915" y="440" width="1" height="4" fill="#1c1c1c"/>
<rect x="919" y="442" width="1" height="2" fill="#1c1c1c"/>
<rect x="924" y="442" width="1" height="2" fill="#1c1c1c"/>
<rect x="929" y="442" width="1" height="2" fill="#1c1c1c"/>
<rect x="934" y="442" width="1" height="2" fill="#1c1c1c"/>
<rect x="939" y="430" width="1" height="14" fill="#1c1c1c"/>
<rect x="944" y="442" width="1" height="2" fill="#1c1c1c"/>
<rect x="948" y="442" width="1" height="2" fill="#1c1c1c"/>
<rect x="953" y="442" width="1" height="2" fill="#1c1c1c"/>
<rect x="958" y="442" width="1" height="2" fill="#1c1c1c"/>
<rect x="963" y="440" width="1" height="4" fill="#1c1c1c"/>
<rect x="968" y="442" width="1" height="2" fill="#1c1c1c"/>
<rect x="973" y="442" width="1" height="2" fill="#1c1c1c"/>
<rect x="977" y="442" width="1" height="2" fill="#1c1c1c"/>
<rect x="982" y="442" width="1" height="2" fill="#1c1c1c"/>
<rect x="987" y="440" width="1" height="4" fill="#1c1c1c"/>
<rect x="992" y="442" width="1" height="2" fill="#1c1c1c"/>
<rect x="997" y="442" width="1" height="2" fill="#1c1c1c"/>
<rect x="1002" y="442" width="1" height="2" fill="#1c1c1c"/>
<rect x="1007" y="442" width="1" height="2" fill="#1c1c1c"/>
<rect x="1011" y="440" width="1" height="4" fill="#1c1c1c"/>
<rect x="1016" y="442" width="1" height="2" fill="#1c1c1c"/>
<rect x="1021" y="442" width="1" height="2" fill="#1c1c1c"/>
<rect x="1026" y="442" width="1" height="2" fill="#1c1c1c"/>
<rect x="1031" y="442" width="1" height="2" fill="#1c1c1c"/>
<rect x="1036" y="440" width="1" height="4" fill="#1c1c1c"/>
<rect x="1040" y="442" width="1" height="2" fill="#1c1c1c"/>
<rect x="1045" y="442" width="1" height="2" fill="#1c1c1c"/>
<rect x="1050" y="442" width="1" height="2" fill="#1c1c1c"/>
<rect x="1055" y="442" width="1" height="2" fill="#1c1c1c"/>
<rect x="1060" y="430" width="1" height="14" fill="#1c1c1c"/>
<rect x="1065" y="442" width="1" height="2" fill="#1c1c1c"/>
<rect x="1069" y="442" width="1" height="2" fill="#1c1c1c"/>
<rect x="1074" y="442" width="1" height="2" fill="#1c1c1c"/>
<rect x="1079" y="442" width="1" height="2" fill="#1c1c1c"/>
<rect x="1084" y="440" width="1" height="4" fill="#1c1c1c"/>
<rect x="1089" y="442" width="1" height="2" fill="#1c1c1c"/>
<rect x="1094" y="442" width="1" height="2" fill="#1c1c1c"/>
<rect x="1098" y="442" width="1" height="2" fill="#1c1c1c"/>
<rect x="1103" y="442" width="1" height="2" fill="#1c1c1c"/>
<rect x="1108" y="440" width="1" height="4" fill="#1c1c1c"/>
<rect x="1113" y="442" width="1" height="2" fill="#1c1c1c"/>
<rect x="1118" y="442" width="1" height="2" fill="#1c1c1c"/>
<rect x="1123" y="442" width="1" height="2" fill="#1c1c1c"/>
<rect x="1127" y="442" width="1" height="2" fill="#1c1c1c"/>
<rect x="1132" y="440" width="1" height="4" fill="#1c1c1c"/>
<rect x="1137" y="442" width="1" height="2" fill="#1c1c1c"/>
<rect x="1142" y="442" width="1" height="2" fill="#1c1c1c"/>
<rect x="1147" y="442" width="1" height="2" fill="#1c1c1c"/>
<rect x="1152" y="442" width="1" height="2" fill="#1c1c1c"/>
<rect x="1156" y="440" width="1" height="4" fill="#1c1c1c"/>
<rect x="1161" y="442" width="1" height="2" fill="#1c1c1c"/>
<rect x="1166" y="442" width="1" height="2" fill="#1c1c1c"/>
<rect x="1171" y="442" width="1" height="2" fill="#1c1c1c"/>
<rect x="1176" y="442" width="1" height="2" fill="#1c1c1c"/>
<rect x="1181" y="430" width="1" height="14" fill="#1c1c1c"/>
<rect x="1185" y="442" width="1" height="2" fill="#1c1c1c"/>
<rect x="1190" y="442" width="1" height="2" fill="#1c1c1c"/>
<rect x="1195" y="442" width="1" height="2" fill="#1c1c1c"/>
<rect x="1200" y="442" width="1" height="2" fill="#1c1c1c"/>
</svg>
<div class="a rl" style="left:97px">00<i>:</i>00<i>:</i>00<i>:</i>00</div>
<div class="a rl" style="left:217px">00<i>:</i>00<i>:</i>25<i>:</i>00</div>
<div class="a rl" style="left:338px">00<i>:</i>00<i>:</i>50<i>:</i>00</div>
<div class="a rl" style="left:459px">00<i>:</i>01<i>:</i>15<i>:</i>00</div>
<div class="a rl" style="left:580px">00<i>:</i>01<i>:</i>40<i>:</i>00</div>
<div class="a rl" style="left:701px">00<i>:</i>02<i>:</i>05<i>:</i>00</div>
<div class="a rl" style="left:822px">00<i>:</i>02<i>:</i>30<i>:</i>00</div>
<div class="a rl" style="left:943px">00<i>:</i>02<i>:</i>55<i>:</i>00</div>
<div class="a rl" style="left:1064px">00<i>:</i>03<i>:</i>20<i>:</i>00</div>
<div class="a rl" style="left:1185px">00<i>:</i>03<i>:</i>45<i>:</i>00</div>
<!-- tracks -->
<div class="a trk" style="top:452px;height:37px;"></div>
<div class="a" style="left:93px;top:474px;width:1108px;height:1px;background:#7c7c7e;"></div>
<div class="a" style="left:93px;top:489px;width:1108px;height:2px;background:#3a3a3a;"></div>
<div class="a trk" style="top:491px;height:58px;background:#a8a8a8;"></div>
<!-- clip -->
<div class="a" style="left:94px;top:491px;width:1107px;height:22px;background:#fff59b;box-sizing:border-box;border:2px solid #1d5fd8;border-right:0;"></div>
<div class="a" style="left:94px;top:513px;width:1107px;height:21px;background:#c3fb8d;"></div>
<div class="a" style="left:93px;top:534px;width:1108px;height:1px;background:#5c5c5c;"></div>
<svg style="left:94px;top:521px" width="13" height="13" viewBox="0 0 13 13"><path d="M0 4l9 9h-9z" fill="#686868"/></svg>
<svg style="left:96px;top:493px" width="26" height="16" viewBox="0 0 26 16">
 <rect x="1" y="1" width="24" height="14" fill="#fff"/>
 <rect x="1" y="1" width="23" height="13" fill="#2a2422"/>
 <g filter="url(#bl)"><rect x="5" y="2" width="6" height="4" fill="#9a98a0"/><rect x="12" y="2" width="5" height="5" fill="#a8a8a0"/><rect x="18" y="3" width="4" height="4" fill="#6a6470"/><ellipse cx="8" cy="11" rx="3" ry="3" fill="#b08878"/><ellipse cx="14" cy="10" rx="2.500" ry="3" fill="#a08078"/><ellipse cx="20" cy="11" rx="2" ry="2.500" fill="#6a4a48"/></g>
 <path d="M1 10l4 4.500h-4z" fill="#686868"/>
</svg>
<div class="a cj" style="left:124px;top:495px;color:#000;">为梦想固执到底，自制房车穿越国境_超清</div>
<div class="a cj" style="left:97px;top:518px;color:#000;">为梦想固执到底，自制房车穿越国境_超清</div>
<div class="a" style="left:93px;top:548px;width:1108px;height:1px;background:#444;"></div>
<div class="a" style="left:93px;top:549px;width:1108px;height:1px;background:#909090;"></div>
<div class="a" style="left:93px;top:550px;width:1108px;height:2px;background:#4a4a4a;"></div>
<div class="a" style="left:93px;top:552px;width:1108px;height:1px;background:#333;"></div>
<div class="a trk" style="top:553px;height:27px;"></div>
<div class="a" style="left:93px;top:575px;width:1108px;height:1px;background:#7c7c7e;"></div>
<div class="a" style="left:93px;top:579px;width:1108px;height:1px;background:#848486;"></div>
<div class="a" style="left:93px;top:580px;width:1108px;height:3px;background:#333;"></div>
<div class="a trk" style="top:583px;height:54px;"></div>
<div class="a" style="left:93px;top:606px;width:1108px;height:1px;background:#3c3c3c;"></div>
<div class="a" style="left:93px;top:629px;width:1108px;height:1px;background:#3c3c3c;"></div>
<div class="a" style="left:93px;top:637px;width:1108px;height:5px;background:#262626;"></div>
<div class="a" style="left:94px;top:639px;width:14px;height:6px;background:#6a6a6a;border:1px solid #8a8a8a;border-radius:3px;box-sizing:border-box;"></div>
<div class="a" style="left:110px;top:639px;width:566px;height:6px;background:#6a6a6a;border:1px solid #8a8a8a;border-radius:3px;box-sizing:border-box;"></div>
<!-- playhead -->
<div class="a" style="left:139px;top:451px;width:1px;height:186px;background:#2fe0e0;"></div>
<div class="a" style="left:140px;top:451px;width:1px;height:186px;background:rgba(47,224,224,0.35);"></div>
<div class="a" style="left:139px;top:491px;width:1px;height:22px;background:#e88020;"></div>
<div class="a" style="left:139px;top:513px;width:1px;height:36px;background:#c8382a;"></div>
<div class="a" style="left:139px;top:430px;width:1px;height:21px;background:#a80000;"></div>
<svg style="left:122px;top:414px" width="36" height="20" viewBox="122 414 36 20"><path d="M125.500 416.500h28l-14 14z" fill="#444" stroke="#fff" stroke-width="2"/></svg>
<!-- track headers -->
<div class="a" style="left:0;top:415px;width:92px;height:227px;background:#4a4a4a;"></div>
<div class="a" style="left:0;top:415px;width:89px;height:1px;background:#8a8a8a;"></div>
<div class="a" style="left:0;top:416px;width:64px;height:17px;background:#5c5c5c;"></div>
<div class="a" style="left:0;top:418px;width:62px;height:12px;background:#262626;border-bottom:1px solid #7a7a7a;"></div>
<div class="a" style="left:44px;top:420px;width:17px;height:9px;background:#6c6c6c;border:1px solid #909090;border-radius:3px;box-sizing:border-box;"></div>
<div class="a" style="left:50px;top:421px;width:1px;height:7px;background:#fff;box-shadow:2px 0 0 #fff,4px 0 0 #fff;"></div>
<div class="a" style="left:0;top:433px;width:64px;height:1px;background:#333;"></div>
<div class="a" style="left:0;top:434px;width:64px;height:17px;background:#5e5e5e;border-top:1px solid #858585;box-sizing:border-box;overflow:hidden;"><span class="cj" style="position:absolute;left:-7px;top:1px;font-family:'Liberation Serif','WenQuanYi Zen Hei',serif;letter-spacing:1.6px;">动<span style="margin-left:2.500px">(F)</span></span></div>
<svg style="left:42px;top:438px" width="20" height="10" viewBox="42 438 20 10"><path d="M43 441.500h8.500l-4.250 4.500z M56 439.300l4.500 4.200l-4.500 4.200z" fill="#fff"/></svg>
<div class="a" style="left:64px;top:416px;width:25px;height:35px;background:#666;border-left:1px solid #8c8c8c;border-top:1px solid #8c8c8c;box-sizing:border-box;"></div>
<div class="a" style="left:90px;top:415px;width:3px;height:227px;background:#424242;"></div>
<div class="a" style="left:89px;top:415px;width:1px;height:227px;background:#6e6e6e;"></div>
<div class="a hd" style="top:453px;height:36px;"></div><div class="a hb" style="top:453px;height:36px;"></div>
<div class="a" style="left:0;top:489px;width:89px;height:1px;background:#6e6e6e;"></div>
<div class="a hd" style="top:491px;height:58px;"></div><div class="a hb" style="top:491px;height:58px;"></div>
<div class="a" style="left:0;top:549px;width:89px;height:1px;background:#6e6e6e;"></div>
<div class="a hd" style="top:554px;height:25px;"></div><div class="a hb" style="top:554px;height:25px;"></div>
<div class="a" style="left:0;top:579px;width:89px;height:1px;background:#6e6e6e;"></div>
<div class="a hd" style="top:583px;height:23px;"></div><div class="a hb" style="top:583px;height:23px;"></div>
<div class="a" style="left:0;top:606px;width:89px;height:1px;background:#6e6e6e;"></div>
<div class="a hd" style="top:607px;height:22px;"></div><div class="a hb" style="top:607px;height:22px;"></div>
<div class="a" style="left:0;top:629px;width:89px;height:1px;background:#6e6e6e;"></div>
<div class="a hd" style="top:630px;height:7px;"></div><div class="a hb" style="top:630px;height:7px;"></div>
<div class="a" style="left:0;top:637px;width:89px;height:1px;background:#6e6e6e;"></div>
<div class="a" style="left:0;top:450px;width:89px;height:2px;background:#2c2c2c;"></div><div class="a" style="left:0;top:452px;width:89px;height:1px;background:#6e6e6e;"></div>
<div class="a" style="left:0;top:553px;width:89px;height:1px;background:#6e6e6e;"></div>
<div class="a" style="left:0;top:490px;width:89px;height:1px;background:#1c1c1c;"></div>
<div class="a" style="left:0;top:551px;width:89px;height:2px;background:#2a2a2a;"></div>
<div class="a" style="left:0;top:580px;width:89px;height:2px;background:#2a2a2a;"></div><div class="a" style="left:0;top:582px;width:89px;height:1px;background:#6e6e6e;"></div>
<div class="a" style="left:64px;top:452px;width:1px;height:185px;background:#6e6e6e;"></div>
<svg style="left:0;top:416px" width="92" height="226" viewBox="0 416 92 226">
<g transform="translate(70,429)"><path d="M0 2.200l3.600-2.700v1.900h5.400v1.600h-9z M13 6.800l-3.600 2.700v-1.900h-5.400v-1.600h9z" fill="#fff"/><path d="M3.500 3.300l6 2.400" stroke="#fff" stroke-width="0.900"/></g><g transform="translate(70,466)"><path d="M0 2.200l3.600-2.700v1.900h5.400v1.600h-9z M13 6.800l-3.600 2.700v-1.900h-5.400v-1.600h9z" fill="#fff"/><path d="M3.500 3.300l6 2.400" stroke="#fff" stroke-width="0.900"/></g><g transform="translate(70,515)"><path d="M0 2.200l3.600-2.700v1.900h5.400v1.600h-9z M13 6.800l-3.600 2.700v-1.900h-5.400v-1.600h9z" fill="#fff"/><path d="M3.500 3.300l6 2.400" stroke="#fff" stroke-width="0.900"/></g><g transform="translate(70,567)"><path d="M0 2.200l3.600-2.700v1.900h5.400v1.600h-9z M13 6.800l-3.600 2.700v-1.900h-5.400v-1.600h9z" fill="#fff"/><path d="M3.500 3.300l6 2.400" stroke="#fff" stroke-width="0.900"/></g><g transform="translate(70,590.5)"><path d="M0 2.200l3.600-2.700v1.900h5.400v1.600h-9z M13 6.800l-3.600 2.700v-1.900h-5.400v-1.600h9z" fill="#fff"/><path d="M3.500 3.300l6 2.400" stroke="#fff" stroke-width="0.900"/></g><g transform="translate(70,613.3)"><path d="M0 2.200l3.600-2.700v1.900h5.400v1.600h-9z M13 6.800l-3.600 2.700v-1.900h-5.400v-1.600h9z" fill="#fff"/><path d="M3.500 3.300l6 2.400" stroke="#fff" stroke-width="0.900"/></g><g transform="translate(70,635.5)"><path d="M0 2.200l3.600-2.700v1.900h5.400v1.600h-9z M13 6.800l-3.600 2.700v-1.900h-5.400v-1.600h9z" fill="#fff"/><path d="M3.500 3.300l6 2.400" stroke="#fff" stroke-width="0.900"/></g><path d="M46.1 457v13M54.9 457v13M46.1 457.6h9M46.1 463.5h9M46.1 469.4h9" stroke="#fff" stroke-width="1.700" fill="none"/><path d="M46.1 495v13M54.9 495v13M46.1 495.6h9M46.1 501.5h9M46.1 507.4h9" stroke="#fff" stroke-width="1.700" fill="none"/><g transform="translate(45,518.5)"><path d="M0 3h2.500l3.500-3v10l-3.500-3h-2.500z" fill="#fff"/><path d="M7.500 1.500l3 3.500l-3 3.500M9.800 1l2.500 4l-2.500 4" fill="none" stroke="#fff" stroke-width="1"/></g><g transform="translate(45,590)"><path d="M0 3h2.500l3.500-3v10l-3.500-3h-2.500z" fill="#fff"/><path d="M7.500 1.500l3 3.500l-3 3.500M9.800 1l2.500 4l-2.500 4" fill="none" stroke="#fff" stroke-width="1"/></g><g transform="translate(45,612.8)"><path d="M0 3h2.500l3.500-3v10l-3.500-3h-2.500z" fill="#fff"/><path d="M7.500 1.500l3 3.500l-3 3.500M9.800 1l2.500 4l-2.500 4" fill="none" stroke="#fff" stroke-width="1"/></g><path d="M46 560.500h9.600v2.800h-3.300v6.200h-3v-6.200h-3.300z" fill="#fff"/>
</svg>
<div class="a" style="left:0;top:636px;width:89px;height:6px;background:#5c5c5c;"></div>
</body>
</html>
